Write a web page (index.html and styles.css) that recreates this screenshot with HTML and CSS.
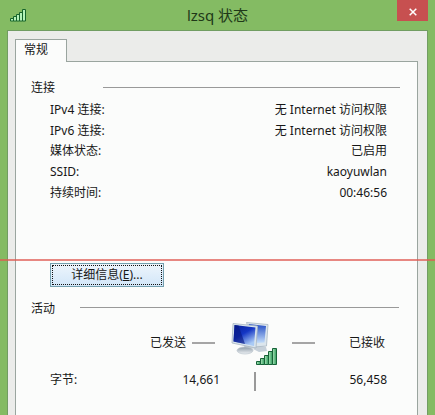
FILE: index.html
```html
<!DOCTYPE html>
<html lang="zh-CN">
<head>
<meta charset="utf-8">
<title>lzsq 状态</title>
<link rel="stylesheet" href="styles.css">
</head>
<body>
<div class="window">
  <header class="titlebar">
    <svg class="signal" width="17" height="13" viewBox="0 0 17 13">
      <g fill="#b5f2b9" stroke="#17642b" stroke-width="1">
        <path d="M.5 9.5h3v2.500h-3zM3.500 7.500h3v4.500h-3zM6.500 5.500h3v6.500h-3zM9.500 3.500h3v8.500h-3zM12.500.5h3v11.500h-3z"/>
      </g>
    </svg>
    <h1 class="title">lzsq 状态</h1>
    <button class="close" aria-label="关闭">
      <svg width="8" height="8" viewBox="0 0 8 8"><path d="M.7.7l6.600 6.600M7.300.7L.7 7.300" stroke="#fff" stroke-width="1.500"/></svg>
    </button>
  </header>
  <main class="client">
    <div class="tabs"><span class="tab">常规</span></div>
    <section class="panel">
      <div class="heading heading-connection"><span>连接</span><i></i></div>
      <dl class="details">
        <div><dt>IPv4 连接:</dt><dd>无 Internet 访问权限</dd></div>
        <div><dt>IPv6 连接:</dt><dd>无 Internet 访问权限</dd></div>
        <div><dt>媒体状态:</dt><dd>已启用</dd></div>
        <div><dt>SSID:</dt><dd>kaoyuwlan</dd></div>
        <div><dt>持续时间:</dt><dd>00:46:56</dd></div>
      </dl>
      <button class="more"><span>详细信息(<u>E</u>)...</span></button>
      <div class="heading heading-activity"><span>活动</span><i></i></div>
      <div class="traffic">
        <span class="sent">已发送</span>
        <i class="dash"></i>
        <svg class="computers" width="48" height="46" viewBox="0 0 48 46">
          <defs>
            <linearGradient id="screen" x1="0" y1="0" x2=".6" y2="1">
              <stop offset="0" stop-color="#071d95"/><stop offset=".5" stop-color="#1436c4"/><stop offset="1" stop-color="#a9caf5"/>
            </linearGradient>
            <linearGradient id="back" x1="0" y1="0" x2="0" y2="1">
              <stop offset="0" stop-color="#244dc4"/><stop offset="1" stop-color="#c3ddfa"/>
            </linearGradient>
            <linearGradient id="bars" x1="0" y1="0" x2="1" y2="0">
              <stop offset="0" stop-color="#b0e8bd"/><stop offset="1" stop-color="#2b9959"/>
            </linearGradient>
            <linearGradient id="stand" x1="0" y1="0" x2="0" y2="1">
              <stop offset="0" stop-color="#8d9ba7"/><stop offset="1" stop-color="#edf1f4"/>
            </linearGradient>
          </defs>
          <path d="M26 24l10 2 1 4-8 1-6-3z" fill="#c6d0d9"/>
          <path d="M16.500 1.500L38 3.500 36.500 25 24 26z" fill="#dce6ed" stroke="#aab7c3" stroke-width=".8"/>
          <path d="M18.500 3L36 5 34.500 21.500 27 22z" fill="url(#back)"/>
          <path d="M14 22l9 2 .5 5h-9z" fill="url(#stand)"/>
          <ellipse cx="15" cy="29.500" rx="8" ry="3.500" fill="url(#stand)" stroke="#bdc7ce" stroke-width=".7"/>
          <path d="M3 2.500L27.500 5 26 27 2 22z" fill="#d9e5ed" stroke="#a7b5c1" stroke-width=".8"/>
          <path d="M4.500 4L25.500 6.500 24 25 3.500 20.500z" fill="url(#screen)"/>
          <path d="M4.500 4l4 .5L15 23l-11.500-2.500z" fill="#071984" opacity=".65"/>
          <g fill="url(#bars)" stroke="#176338">
            <path d="M26.500 40.500h4v3h-4z"/><path d="M30.500 37.500h4v6h-4z"/><path d="M34.500 34.500h4v9h-4z"/><path d="M38.500 30.500h4v13h-4z"/><path d="M42.500 27.500h4v16h-4z"/>
          </g>
        </svg>
        <i class="dash"></i>
        <span class="received">已接收</span>
      </div>
      <div class="bytes"><span>字节:</span><span class="number">14,661</span><i></i><span class="number">56,458</span></div>
    </section>
  </main>
  <div class="guide"></div>
</div>
</body>
</html>
```
FILE: styles.css
```css
* { box-sizing: border-box; }
body {
  margin: 0;
  color: #171717;
  font: 12px/20px "Noto Sans", "Noto Sans CJK SC", sans-serif;
}
button { font: inherit; color: inherit; padding: 0; }
.window {
  position: relative;
  height: 415px;
  overflow: hidden;
  padding: 0 7px;
  background: #84bb63;
}
.titlebar {
  display: grid;
  grid-template-columns: 90px 1fr 90px;
  height: 30px;
}
.signal { margin: 9px 0 0 3px; }
.title {
  margin: 0;
  padding-top: 1px;
  text-align: center;
  font-size: 15px;
  font-weight: 400;
  line-height: 29px;
  color: #203818;
}
.close {
  display: grid;
  place-items: center;
  justify-self: end;
  width: 31px;
  height: 21px;
  padding-top: 2px;
  border: 0;
  background: #c75050;
}
.client {
  height: 385px;
  padding: 8px 9px 0 7px;
  background: #ebecea;
  border: solid #719d62;
  border-width: 1px 1px 0;
}
.tabs { height: 22px; }
.tab {
  position: relative;
  display: block;
  width: 52px;
  height: 23px;
  padding-left: 8px;
  line-height: 20px;
  background: #fbfcfb;
  border: 1px solid #9aa59f;
  border-bottom: 0;
}
.panel {
  height: 360px;
  padding: 16px 18px 0 15px;
  background: #fbfcfb;
  border: 1px solid #9aa59f;
  border-bottom: 0;
}
.heading { display: flex; height: 20px; }
.heading i { flex: 1; height: 1px; background: #999; }
.heading-connection i { margin: 9px -1px 0 48px; }
.heading-activity i { margin: 9px 0 0 25px; }
.heading-activity span { padding-top: 1px; }
.details { margin: 2px 12px 0 19px; }
.details div {
  display: flex;
  justify-content: space-between;
  height: 20.7px;
}
dd { margin: 0; }
.more {
  display: block;
  width: 114px;
  height: 24px;
  margin: 60px 0 0 19px;
  padding: 1px;
  background: linear-gradient(#edf5fc, #d2e6f8);
  border: 1px solid #749fae;
}
.more span {
  display: block;
  height: 20px;
  line-height: 18px;
  border: 1px dotted #111;
}
.heading-activity { margin-top: 11px; }
.traffic {
  display: flex;
  align-items: flex-start;
  height: 52px;
  padding: 4px 0 0 119px;
}
.traffic span { margin-top: 11px; }
.dash { width: 23px; height: 2px; margin-top: 20px; background: #a5a5a5; }
.sent + .dash { margin-left: 6px; }
.computers { margin: -1px 14px 0 15px; }
.received { margin-left: 34px; }
.bytes {
  display: grid;
  grid-template-columns: 60px 110px 69px 98px;
  padding: 0 0 0 19px;
}
.number { text-align: right; }
.bytes i { justify-self: center; width: 2px; height: 19px; margin-top: 2px; background: #999; }
.guide {
  position: absolute;
  top: 259px;
  left: 0;
  right: 0;
  height: 2px;
  background: #df5a52b8;
}
```
